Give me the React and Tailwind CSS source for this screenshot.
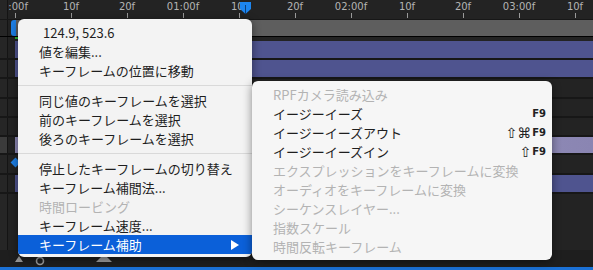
import React from 'react';

const jp = { fontFamily: '"Noto Sans CJK JP", "Noto Sans", sans-serif' };

const rulerLabels = ['0:00f', '10f', '20f', '01:00f', '10f', '20f', '02:00f', '10f', '20f', '03:00f', '10f', '20f'];

const Row = ({ h, bar, left = 'bg-[#262626]', children }) => (
  <div className={`flex ${h}`}>
    <div className={`w-[8px] ${left} border-r border-[#141414]`} />
    <div className="relative w-[7px]">{children}</div>
    <div className={`flex-1 ${bar || ''}`} />
  </div>
);

const Line = ({ h = 'h-[2px]' }) => <div className={`${h} bg-[#171717]`} />;

const mainItems = [
  { label: '124.9, 523.6', first: true },
  { label: '値を編集...' },
  { label: 'キーフレームの位置に移動' },
  'sep',
  { label: '同じ値のキーフレームを選択' },
  { label: '前のキーフレームを選択' },
  { label: '後ろのキーフレームを選択' },
  'sep',
  { label: '停止したキーフレームの切り替え' },
  { label: 'キーフレーム補間法...' },
  { label: '時間ロービング', disabled: true },
  { label: 'キーフレーム速度...' },
  { label: 'キーフレーム補助', active: true },
];

const subItems = [
  { label: 'RPFカメラ読み込み', disabled: true },
  { label: 'イージーイーズ', sym: '', key: 'F9' },
  { label: 'イージーイーズアウト', sym: '⇧⌘', key: 'F9' },
  { label: 'イージーイーズイン', sym: '⇧', key: 'F9' },
  { label: 'エクスプレッションをキーフレームに変換', disabled: true },
  { label: 'オーディオをキーフレームに変換', disabled: true },
  { label: 'シーケンスレイヤー...', disabled: true },
  { label: '指数スケール', disabled: true },
  { label: '時間反転キーフレーム', disabled: true },
];

const MenuItem = ({ item, sub }) => {
  if (item === 'sep') return <div className="h-[11px] flex items-center"><div className="h-px w-full bg-[#d9d9d9]" /></div>;
  const color = item.active ? 'bg-[#0b60d9] text-white' : item.disabled ? 'text-[#b3b3b3]' : 'text-[#1e1e1e]';
  return (
    <div className={`h-[19px] flex items-center justify-between text-[13px] leading-none ${item.first ? 'pl-[25px]' : 'pl-[21px]'} ${sub ? 'pr-[6px]' : 'pr-[13px]'} ${color}`}>
      <span>{item.label}</span>
      {item.active && (
        <svg width="8" height="10" viewBox="0 0 8 10"><path d="M0 0 L8 5 L0 10 Z" fill="white" /></svg>
      )}
      {item.key && (
        <span className="flex items-center text-[#222]" style={{ fontFamily: '"DejaVu Sans", sans-serif' }}>
          <span className="text-[14px] leading-none">{item.sym}</span>
          <span className="text-[10px] font-bold leading-none ml-px">{item.key}</span>
        </span>
      )}
    </div>
  );
};

export default function App() {
  return (
    <div className="relative w-[593px] h-[270px] overflow-hidden bg-[#232323]" style={jp}>
      <div className="flex flex-col h-full">
        {/* ruler */}
        <div className="flex h-[19px] bg-[#232323]">
          <div className="w-[8px] bg-[#262626] border-r border-[#141414] z-10" />
          <div className="relative flex-1 overflow-hidden">
            <div className="flex ml-[-21px]">
              {rulerLabels.map((l, i) => (
                <div key={i} className="w-[56px] shrink-0 flex flex-col items-center">
                  <span className="h-[13px] text-[10px] leading-[13px] text-[#b4b4b4]" style={{ fontFamily: '"DejaVu Sans", sans-serif' }}>{l}</span>
                  <div className="w-px h-[5px] bg-[#9a9a9a]" />
                </div>
              ))}
            </div>
          </div>
        </div>
        <Line h="h-px" />
        <Row h="h-[16px]" bar="bg-[#5e5e5e]">
          <div className="absolute right-[-1px] top-0 w-[5px] h-[16px] rounded-l-[3px] bg-[#1d7fe6]" />
        </Row>
        <div className="h-px bg-black" />
        <Row h="h-[4px]">
          <div className="absolute right-[-5px] top-0 w-[5px] h-[2px] bg-[#2fb52f]" />
        </Row>
        <Row h="h-[17px]" bar="bg-[#4f548f]" />
        <Line />
        <Row h="h-[17px]" bar="bg-[#4f548f]" />
        <Line />
        <Row h="h-[18px]" />
        <Line />
        <Row h="h-[17px]" />
        <Line />
        <Row h="h-[17px]" />
        <Line />
        <Row h="h-[16px]" left="bg-[#3b3b3b]" bar="bg-[linear-gradient(90deg,#8c87b4,#9a96c0,#8a85b2)]" />
        <Line />
        <Row h="h-[18px]">
          <div className="absolute right-[-4px] top-[4px] w-[7px] h-[7px] rotate-45 bg-[#1d7fe6]" />
        </Row>
        <Line />
        <Row h="h-[17px]" bar="bg-[#4f548f]" />
        <Line />
        <Row h="h-[56px]" />
        <div className="h-[17px] bg-[#1e1e1e] flex items-center">
          <svg width="130" height="17" viewBox="0 0 130 17">
            <path d="M15 12 L19 6 L23 12 Z" fill="#9a9a9a" />
            <circle cx="40" cy="11" r="3.5" stroke="#9a9a9a" strokeWidth="1.6" fill="none" />
            <path d="M96 12 L104 4 L112 12 Z" fill="#9a9a9a" />
          </svg>
        </div>
        <div className="h-[3px] bg-[#1b71d6]" />
      </div>

      {/* playhead */}
      <div className="absolute left-[240px] top-[2px] flex flex-col items-center">
        <svg width="11" height="12" viewBox="0 0 11 12">
          <path d="M0 0 H11 V7 L5.5 12 L0 7 Z" fill="#1d86f0" />
          <path d="M5.5 3 V12" stroke="#0d3f7a" strokeWidth="1" />
        </svg>
      </div>

      {/* main menu */}
      <div className="absolute left-[18px] top-[19px] w-[234px] pt-[4px] pb-[3px] rounded-[6px] bg-[#f3f3f3] shadow-[0_2px_10px_rgba(0,0,0,0.45)] overflow-hidden">
        {mainItems.map((it, i) => <MenuItem key={i} item={it} />)}
      </div>

      {/* submenu */}
      <div className="absolute left-[252px] top-[81px] w-[300px] pt-[4px] pb-[4px] rounded-[6px] bg-[#f6f6f6] shadow-[0_2px_10px_rgba(0,0,0,0.45)]">
        {subItems.map((it, i) => <MenuItem key={i} item={it} sub />)}
      </div>
    </div>
  );
}
